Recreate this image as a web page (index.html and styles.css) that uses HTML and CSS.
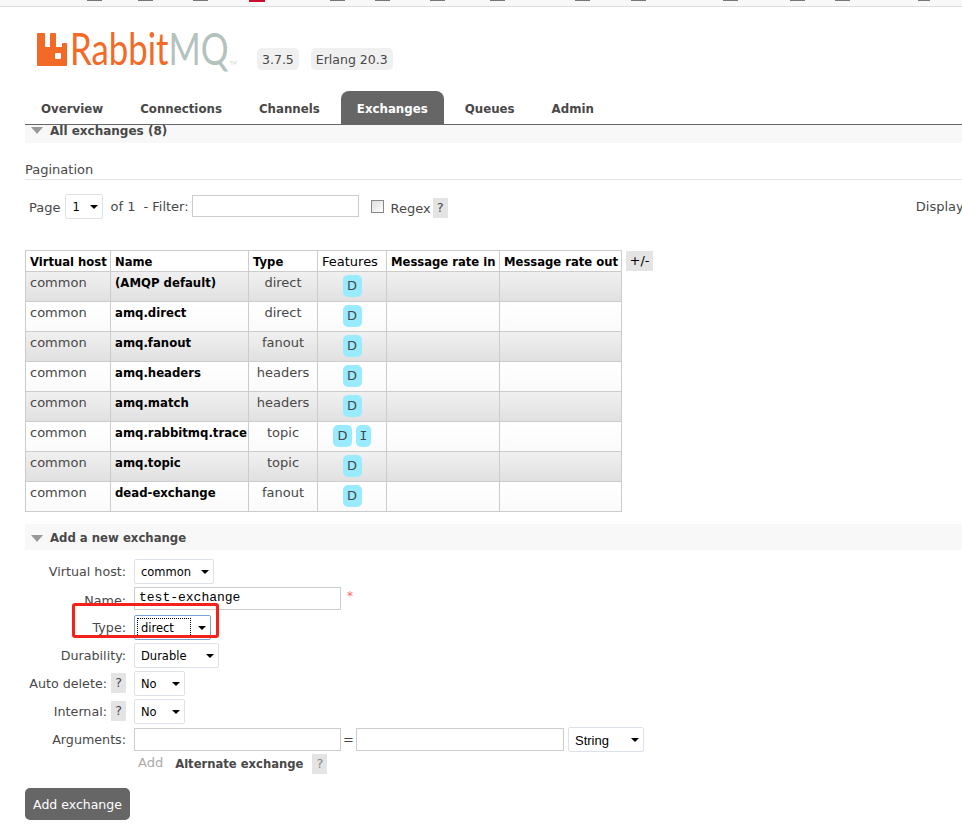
FILE: index.html
```html
<!DOCTYPE html>
<html lang="en">
<head>
    <meta charset="UTF-8">
    <title>RabbitMQ Management</title>
    <link rel="stylesheet" href="styles.css">
</head>
<body>

    <div class="topbar"></div>

    <div class="page">

        <!-- Logo and versions -->
        <header class="header">
            <svg class="logo-icon" width="30" height="33" viewBox="0 0 30 33">
                <path fill="#f26a25" fill-rule="evenodd" d="M0 1a1 1 0 0 1 1-1h6a1 1 0 0 1 1 1v13h5V1a1 1 0 0 1 1-1h4a1 1 0 0 1 1 1v13h6V11a1 1 0 0 1 1-1h3a1 1 0 0 1 1 1v21a1 1 0 0 1-1 1H1a1 1 0 0 1-1-1zM18 21v4a1 1 0 0 0 1 1h4a1 1 0 0 0 1-1v-4a1 1 0 0 0-1-1h-4a1 1 0 0 0-1 1z"/>
            </svg>
            <span class="logo-text"><span class="logo-rabbit">Rabbit</span><span class="logo-mq">MQ</span><span class="logo-tm">TM</span></span>
            <span class="version">3.7.5</span>
            <span class="version">Erlang 20.3</span>
            <span class="refreshed">Refreshed 2018-06-23 10:41:22</span>
        </header>

        <nav class="tabs">
            <a href="#">Overview</a>
            <a href="#">Connections</a>
            <a href="#">Channels</a>
            <a href="#" class="active">Exchanges</a>
            <a href="#">Queues</a>
            <a href="#">Admin</a>
        </nav>

        <h2 class="section-title first"><span class="arrow"></span>All exchanges (8)</h2>

        <h3 class="pagination-title">Pagination</h3>
        <div class="pagination">
            <span class="page-label">Page</span>
            <span class="select select-page"><select><option>1</option></select></span>
            <span class="of">of 1</span>
            <span>- Filter:</span>
            <input type="text" class="filter">
            <input type="checkbox" class="regex-box">
            <span class="regex">Regex</span>
            <span class="help">?</span>
            <span class="displaying">Displaying 8 items</span>
        </div>

        <div class="table-wrap">
            <table class="list">
                <colgroup>
                    <col class="col-vhost"><col class="col-name"><col class="col-type">
                    <col class="col-features"><col class="col-rate-in"><col class="col-rate-out">
                </colgroup>
                <thead>
                    <tr>
                        <th>Virtual host</th>
                        <th>Name</th>
                        <th>Type</th>
                        <th class="plain">Features</th>
                        <th>Message rate in</th>
                        <th>Message rate out</th>
                    </tr>
                </thead>
                <tbody>
                    <tr class="alt"><td>common</td><td class="name">(AMQP default)</td><td class="center">direct</td><td class="center"><abbr class="badge">D</abbr></td><td></td><td></td></tr>
                    <tr><td>common</td><td class="name">amq.direct</td><td class="center">direct</td><td class="center"><abbr class="badge">D</abbr></td><td></td><td></td></tr>
                    <tr class="alt"><td>common</td><td class="name">amq.fanout</td><td class="center">fanout</td><td class="center"><abbr class="badge">D</abbr></td><td></td><td></td></tr>
                    <tr><td>common</td><td class="name">amq.headers</td><td class="center">headers</td><td class="center"><abbr class="badge">D</abbr></td><td></td><td></td></tr>
                    <tr class="alt"><td>common</td><td class="name">amq.match</td><td class="center">headers</td><td class="center"><abbr class="badge">D</abbr></td><td></td><td></td></tr>
                    <tr><td>common</td><td class="name">amq.rabbitmq.trace</td><td class="center">topic</td><td class="center"><abbr class="badge">D</abbr><abbr class="badge badge-i">I</abbr></td><td></td><td></td></tr>
                    <tr class="alt"><td>common</td><td class="name">amq.topic</td><td class="center">topic</td><td class="center"><abbr class="badge">D</abbr></td><td></td><td></td></tr>
                    <tr><td>common</td><td class="name">dead-exchange</td><td class="center">fanout</td><td class="center"><abbr class="badge">D</abbr></td><td></td><td></td></tr>
                </tbody>
            </table>
            <span class="columns-toggle">+/-</span>
        </div>

        <h2 class="section-title second"><span class="arrow"></span>Add a new exchange</h2>

        <!-- Add exchange form -->
        <form class="add-form" onsubmit="return false;">
            <div class="form-row">
                <label>Virtual host:</label>
                <span class="select select-vhost"><select><option>common</option></select></span>
            </div>
            <div class="form-row">
                <label class="label-low">Name:</label>
                <input type="text" class="field field-name" value="test-exchange">
                <span class="required">*</span>
            </div>
            <div class="form-row">
                <label>Type:</label>
                <span class="select select-type"><select><option>direct</option></select></span>
                <span class="highlight"></span>
            </div>
            <div class="form-row">
                <label>Durability:</label>
                <span class="select select-durable"><select><option>Durable</option></select></span>
            </div>
            <div class="form-row">
                <label>Auto delete:<span class="help help-label">?</span></label>
                <span class="select select-small"><select><option>No</option></select></span>
            </div>
            <div class="form-row">
                <label>Internal:<span class="help help-label">?</span></label>
                <span class="select select-small"><select><option>No</option></select></span>
            </div>
            <div class="form-row">
                <label>Arguments:</label>
                <input type="text" class="field field-arg">
                <span class="equals">=</span>
                <input type="text" class="field field-arg">
                <span class="select select-string"><select><option>String</option></select></span>
            </div>
            <div class="form-row add-row">
                <span class="add-link">Add</span>
                <strong class="alternate">Alternate exchange</strong>
                <span class="help help-muted">?</span>
            </div>
            <button class="submit">Add exchange</button>
        </form>

    </div>

</body>
</html>
```

FILE: styles.css
```css
html, body {
    margin: 0;
    padding: 0;
    height: 830px;
    overflow: hidden;
    background-color: #fff;
}

body {
    font-family: "DejaVu Sans", Verdana, sans-serif;
    font-size: 13px;
    color: #484848;
}

/* strip of the browser toolbar left at the top of the capture */
.topbar {
    height: 6px;
    background-color: #f8f8f8;
    border-bottom: 1px solid #ddd;
    background-repeat: no-repeat;
    background-size: 15px 1px, 15px 1px, 15px 1px, 16px 2px, 15px 1px, 15px 1px, 15px 1px, 15px 1px, 15px 1px, 15px 1px, 15px 1px, 15px 1px, 15px 1px, 12px 1px;
    background-position: 87px 0, 138px 0, 193px 0, 249px 0, 330px 0, 375px 0, 430px 0, 490px 0, 575px 0, 631px 0, 723px 0, 790px 0, 835px 0, 918px 0;
    background-image:
        linear-gradient(#777, #777), linear-gradient(#777, #777), linear-gradient(#777, #777),
        linear-gradient(#c8102e, #c8102e),
        linear-gradient(#777, #777), linear-gradient(#777, #777), linear-gradient(#777, #777),
        linear-gradient(#777, #777), linear-gradient(#777, #777), linear-gradient(#777, #777),
        linear-gradient(#777, #777), linear-gradient(#777, #777), linear-gradient(#777, #777),
        linear-gradient(#777, #777);
}

.page {
    width: 1200px;
    padding-left: 25px;
    box-sizing: border-box;
}

.header {
    display: flex;
    align-items: flex-start;
    height: 84px;
}

.logo-icon {
    margin: 26px 0 0 12px;
}

.logo-text {
    margin: 13px 0 0 3px;
    font-family: Lato, sans-serif;
    font-weight: 400;
    font-size: 44px;
    line-height: 56px;
    display: flex;
    align-items: baseline;
    width: 187px;
    transform: scaleX(0.79);
    transform-origin: left center;
    white-space: nowrap;
}

.logo-rabbit {
    color: #f26a25;
}

.logo-mq {
    color: #b4c2bd;
}

.logo-tm {
    color: #ccd4d1;
    font-size: 6px;
    margin-left: 1px;
    line-height: 1;
}

.version {
    margin: 41px 12px 0 0;
    padding: 0 5px;
    height: 22px;
    line-height: 23px;
    font-size: 12.5px;
    background-color: #f0f0f0;
    border-radius: 5px;
}

.refreshed {
    margin: 20px 0 0 auto;
    line-height: 16px;
}

.tabs {
    display: flex;
    gap: 5px;
    height: 33px;
    border-bottom: 1px solid #666;
}

.tabs a {
    color: #484848;
    font-size: 11.8px;
    font-weight: bold;
    text-decoration: none;
    line-height: 36px;
    padding: 0 16px;
    border-radius: 8px 8px 0 0;
}

.tabs a.active {
    background-color: #666;
    color: #fff;
}

.section-title {
    margin: 0;
    font-size: 12px;
    font-weight: bold;
    background-color: #f8f8f8;
    display: flex;
    align-items: center;
    padding-left: 6px;
}

.section-title.first {
    height: 18px;
    align-items: flex-start;
    line-height: 12px;
}

.section-title.second {
    box-sizing: border-box;
    height: 26px;
    margin-top: 12px;
    padding-top: 2px;
    font-size: 11.7px;
    line-height: 16px;
}

.arrow {
    width: 0;
    height: 0;
    border-left: 6px solid transparent;
    border-right: 6px solid transparent;
    border-top: 7px solid #999;
    margin-right: 7px;
}

.section-title.first .arrow {
    margin-top: 2px;
}

.pagination-title {
    margin: 18px 0 0;
    font-size: 13px;
    font-weight: normal;
    line-height: 18px;
    height: 18px;
    border-bottom: 1px solid #e5e5e5;
}

.pagination {
    display: flex;
    align-items: center;
    height: 30px;
    margin-top: 11px;
    padding-left: 4px;
}

.page-label {
    margin-top: 2px;
}

.select {
    position: relative;
    display: inline-block;
    box-sizing: border-box;
    height: 25px;
    border: 1px solid #dde1ea;
    border-radius: 2px;
    background-color: #fff;
}

/* the dropdown triangle */
.select::after {
    content: "";
    position: absolute;
    right: 4px;
    top: 10px;
    border-left: 4px solid transparent;
    border-right: 4px solid transparent;
    border-top: 4px solid #000;
    pointer-events: none;
}

.select select {
    appearance: none;
    -webkit-appearance: none;
    box-sizing: border-box;
    border: 0;
    outline: 0;
    background: transparent;
    width: 100%;
    height: 100%;
    padding: 2px 0 0 6px;
    font-family: "DejaVu Sans", Verdana, sans-serif;
    font-size: 11.5px;
    color: #000;
}

.select-page {
    width: 38px;
    margin: 0 7px 0 5px;
}

.of {
    margin-right: 8px;
}

.filter {
    box-sizing: border-box;
    width: 167px;
    height: 22px;
    margin: 0 0 0 3px;
    border: 1px solid #ccc;
}

.regex-box {
    appearance: none;
    -webkit-appearance: none;
    box-sizing: border-box;
    width: 13px;
    height: 13px;
    margin: 0 7px 0 12px;
    border: 1px solid #888;
    background: linear-gradient(135deg, #ddd, #fff);
}

.regex {
    margin: 5px 2px 0 0;
}

.help {
    display: inline-block;
    width: 15px;
    height: 20px;
    line-height: 20px;
    text-align: center;
    background-color: #e4e4e4;
}

.pagination .help {
    margin-top: 4px;
}

.displaying {
    margin-left: 468px;
    white-space: nowrap;
}

.table-wrap {
    display: flex;
    align-items: flex-start;
    margin-top: 29px;
}

.list {
    border-collapse: collapse;
    table-layout: fixed;
    width: 597px;
    font-size: 13px;
}

.col-vhost { width: 85px; }
.col-name { width: 138px; }
.col-type { width: 69px; }
.col-features { width: 69px; }
.col-rate-in { width: 113px; }
.col-rate-out { width: 122px; }

.list th, .list td {
    border: 1px solid #ccc;
    padding: 0 4px;
    white-space: nowrap;
    overflow: hidden;
}

.list th {
    height: 18px;
    padding-top: 2px;
    text-align: left;
    font-size: 11.6px;
    line-height: 18px;
    color: #000;
    font-weight: bold;
}

.list th.plain {
    height: 18px;
    padding-top: 2px;
    font-size: 13px;
    line-height: 18px;
    font-weight: normal;
}

.list td {
    height: 29px;
    vertical-align: top;
    line-height: 21px;
}

.list tbody tr {
    background: linear-gradient(#fff, #fafafa);
}

.list tbody tr.alt {
    background: linear-gradient(#f0f0f0, #e0e0e0);
}

.list td.name {
    color: #000;
    font-size: 11.7px;
    line-height: 23px;
    font-weight: bold;
}

.list td.center {
    text-align: center;
}

.badge {
    display: inline-block;
    width: 19px;
    height: 22px;
    line-height: 22px;
    margin-top: 3px;
    background-color: #99ebff;
    border-radius: 5px;
    text-align: center;
}

.badge-i {
    width: 15px;
    margin-left: 4px;
    font-family: "DejaVu Sans Mono", monospace;
}

.columns-toggle {
    width: 27px;
    height: 20px;
    line-height: 20px;
    margin: 1px 0 0 4px;
    text-align: center;
    color: #000;
    background-color: #e4e4e4;
}

.add-form {
    margin-top: 7px;
}

.form-row {
    position: relative;
    display: flex;
    align-items: center;
    height: 28px;
}

.form-row label {
    width: 101px;
    margin-right: 8px;
    display: flex;
    justify-content: flex-end;
    align-items: center;
    white-space: nowrap;
    font-size: 12.7px;
}

.label-low {
    padding-top: 2px;
}

.help-label {
    margin-left: 4px;
}

.field {
    box-sizing: border-box;
    height: 23px;
    border: 1px solid #ccc;
    padding: 0 4px;
    margin: 0;
}

.field-name {
    width: 207px;
    margin-top: -1px;
    padding-bottom: 2px;
    font-family: "Liberation Mono", monospace;
    font-size: 13px;
    color: #000;
}

.field-arg {
    width: 207px;
}

.field-arg + .equals + .field-arg {
    width: 208px;
}

.required {
    margin: -6px 0 0 6px;
    color: #f66;
    font-size: 12px;
}

.equals {
    width: 15px;
    text-align: center;
}

.select-vhost { width: 80px; }
.select-durable { width: 85px; }
.select-small { width: 51px; }
.select-string { width: 76px; margin-left: 4px; }

.select-string select {
    font-family: "Liberation Sans", Arial, sans-serif;
    font-size: 13px;
}

.select-type {
    width: 77px;
    border-color: #7ba4d6;
}

/* dotted focus ring inside the focused select */
.select-type::before {
    content: "";
    position: absolute;
    left: 2px;
    top: 2px;
    width: 52px;
    height: 17px;
    border: 1px dotted #000;
    pointer-events: none;
}

/* red annotation drawn over the screenshot */
.highlight {
    position: absolute;
    left: 47px;
    top: -10px;
    width: 141px;
    height: 29px;
    border: 3px solid #f5221b;
    border-radius: 3px;
}

.add-row {
    height: 22px;
    padding-left: 113px;
}

.add-link {
    color: #aaa;
    margin-top: -3px;
}

.alternate {
    margin-left: 12px;
    font-size: 11.6px;
}

.help-muted {
    margin-left: 9px;
    color: #888;
}

.submit {
    display: block;
    margin-top: 13px;
    width: 105px;
    height: 32px;
    border: 0;
    border-radius: 5px;
    background-color: #666;
    color: #fff;
    font-family: "DejaVu Sans", Verdana, sans-serif;
    font-size: 12.5px;
}
```
